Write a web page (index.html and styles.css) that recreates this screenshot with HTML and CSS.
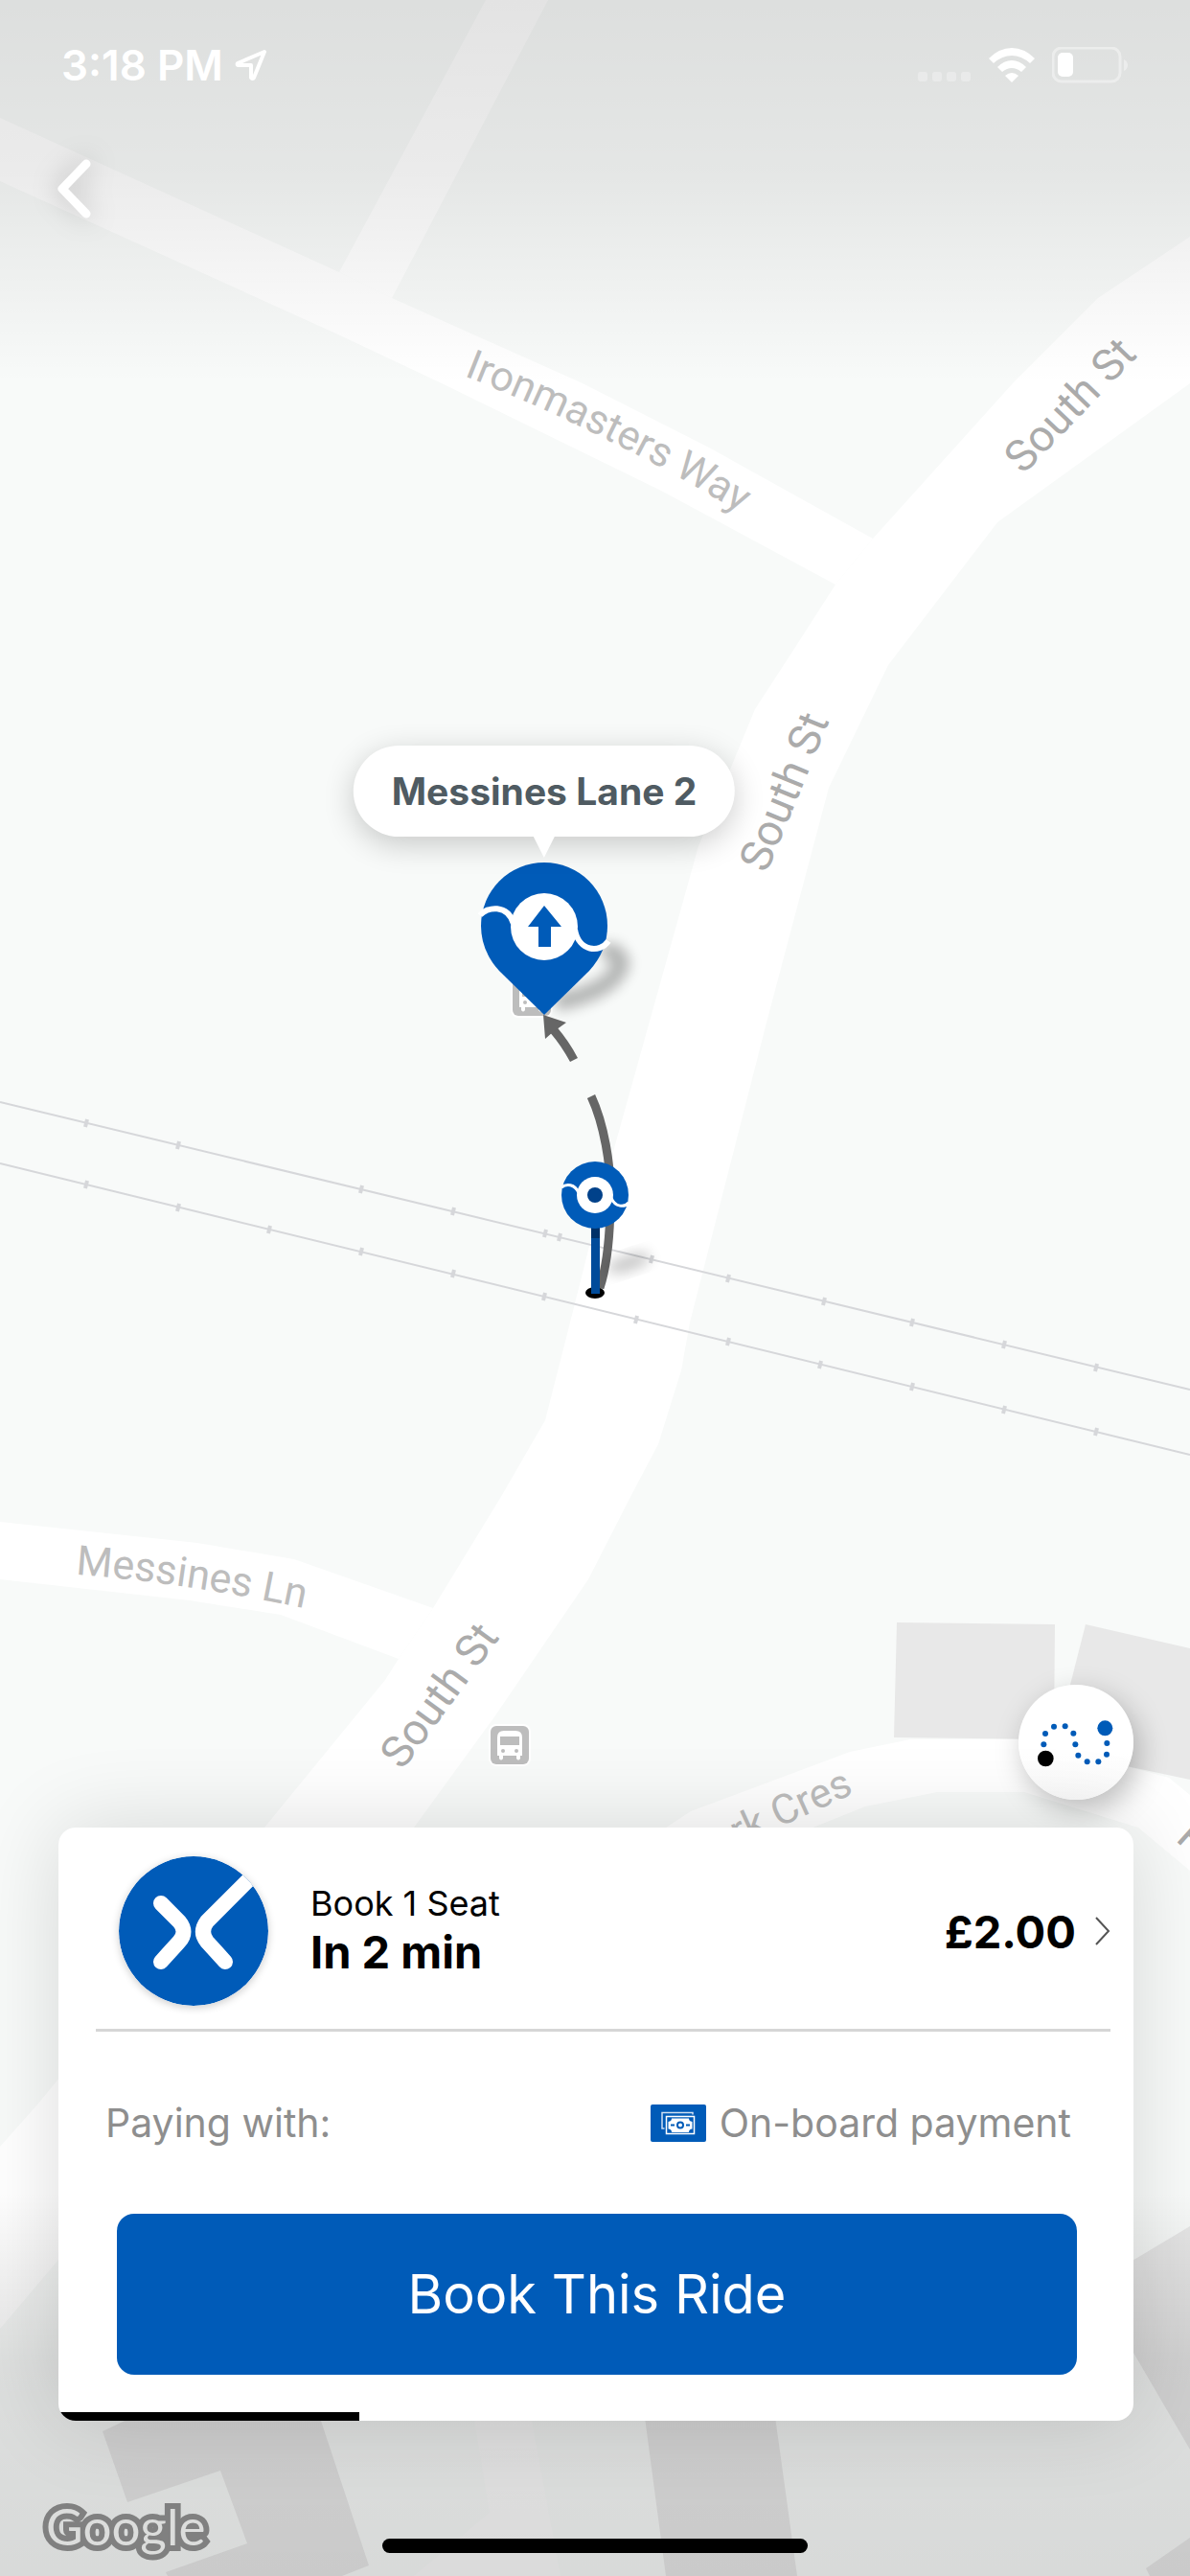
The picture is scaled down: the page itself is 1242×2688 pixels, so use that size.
FILE: index.html
```html
<!DOCTYPE html>
<html lang="en">
<head>
    <meta charset="UTF-8">
    <meta name="viewport" content="width=device-width, initial-scale=1.0">
    <title>Book a Ride</title>
    <link rel="stylesheet" href="styles.css">
</head>
<body>
    <main class="screen">
        <!-- Map -->
        <svg class="map" viewBox="0 0 1242 2688" preserveAspectRatio="xMidYMid slice" role="img" aria-label="Map around South St">
            <defs>
                <path id="ironmasters" d="M484 392 Q650 458 800 552"/>
                <path id="messines" d="M79 1643 Q200 1652 335 1682"/>
                <path id="south-top" d="M1068 496 L1214 344"/>
                <path id="south-mid" d="M800 912 L882 712"/>
                <path id="south-low" d="M420 1848 L540 1684"/>
                <path id="park" d="M670 1972 L892 1871"/>
                <filter id="soft" x="-50%" y="-50%" width="200%" height="200%">
                    <feGaussianBlur stdDeviation="7"/>
                </filter>
                <g id="bus-stop">
                    <rect x="-22" y="-22" width="44" height="44" rx="8" fill="#fff"/>
                    <rect x="-20" y="-20" width="40" height="40" rx="6" fill="#bdbdbd"/>
                    <path fill="#fff" d="M-13 -8 Q-13 -15 -6 -15 H6 Q13 -15 13 -8 V11 H11 V14 Q9 17 7 14 V11 H-7 V14 Q-9 17 -11 14 V11 H-13 Z"/>
                    <rect x="-10" y="-9" width="20" height="9" fill="#bdbdbd"/>
                    <circle cx="-7" cy="6" r="2" fill="#bdbdbd"/>
                    <circle cx="7" cy="6" r="2" fill="#bdbdbd"/>
                </g>
            </defs>

            <rect width="1242" height="2688" fill="#f8faf9"/>

            <!-- roads -->
            <g fill="#fff">
                <path d="M507 0 H572 L409 311 L354 284 Z"/>
                <path d="M0 123 L354 284 L409 311 L608 400 L740 467 L911 562 L872 610 L690 512 L461 400 L355 350 L0 189 Z"/>
                <path d="M1242 247 L1146 311 L1057 400 L911 562 L872 610 L827 680 L788 740 L729 883 L638 1209 L595 1380 L569 1482 L524 1560 L452 1678 L416 1731 L402 1753 L276 1907 L40 2195 L0 2240 V2430 L61 2358 L432 1907 L515 1793 L614 1648 L659 1560 L687 1507 L711 1430 L720 1380 L800 1067 L865 822 L927 694 L1041 545 L1242 400 Z"/>
                <path d="M0 1588 L206 1610 L307 1627 L452 1678 L416 1731 L293 1685 L198 1670 L0 1648 Z"/>
                <path d="M660 1930 L721 1890 L887 1828 L950 1815 L1061 1815 L1176 1843 L1220 1855 L1242 1873 V1952 L1188 1907 L1069 1870 L978 1870 L903 1885 L846 1908 L800 1940 Z"/>
                <path d="M491 2500 L511 2622 L432 2688 H585 L550 2500 Z" fill="#fbfbfb"/>
            </g>

            <!-- buildings -->
            <g fill="#e8e8e8">
                <path d="M936 1693 L1101 1695 L1100 1815 L933 1813 Z"/>
                <path d="M1133 1695 L1242 1720 V1857 L1176 1843 L1100 1825 Z"/>
                <path d="M143 2520 L107 2537 L133 2611 L230 2578 L258 2654 L173 2684 L175 2688 H357 L385 2677 L333 2520 Z"/>
                <path d="M670 2500 L695 2688 H832 L806 2500 Z"/>
                <path d="M1242 2323 L1150 2378 V2390 L1183 2455 L1242 2556 Z"/>
                <path d="M1242 2648 L1196 2680 L1200 2688 H1242 Z"/>
            </g>

            <!-- railway -->
            <g fill="none" stroke="#d6d7da">
                <path stroke-width="2" d="M0 1150 L1242 1450 M0 1214 L1242 1518"/>
                <path stroke-width="4" d="M91 1168 L89 1176 M187 1191 L185 1199 M378 1237 L376 1245 M474 1260 L472 1268 M570 1283 L568 1291 M585 1287 L583 1295 M681 1310 L679 1318 M761 1330 L759 1338 M861 1354 L859 1362 M953 1376 L951 1384 M1049 1399 L1047 1407 M1145 1423 L1143 1431"/>
                <path stroke-width="4" d="M91 1232 L89 1240 M187 1256 L185 1264 M282 1279 L280 1287 M378 1302 L376 1310 M474 1325 L472 1333 M569 1349 L567 1357 M665 1373 L663 1381 M761 1396 L759 1404 M857 1420 L855 1428 M953 1443 L951 1451 M1049 1467 L1047 1475 M1145 1490 L1143 1498"/>
            </g>

            <g class="street">
                <text class="minor"><textPath href="#ironmasters">Ironmasters Way</textPath></text>
                <text class="minor"><textPath href="#messines">Messines Ln</textPath></text>
                <text class="minor" text-anchor="end"><textPath href="#park" startOffset="100%">Park Cres</textPath></text>
                <text><textPath href="#south-top">South St</textPath></text>
                <text><textPath href="#south-mid">South St</textPath></text>
                <text><textPath href="#south-low">South St</textPath></text>
                <text transform="translate(1226 1920) rotate(42)">P</text>
            </g>

            <use href="#bus-stop" x="532" y="1821"/>
            <use href="#bus-stop" x="555" y="1040"/>

            <!-- walking route -->
            <g fill="none" stroke="#666" stroke-width="9">
                <path d="M617 1144 C630 1172 638 1215 637 1250 C637 1290 633 1322 626 1344"/>
                <path d="M599 1106 Q590 1089 578 1075"/>
            </g>
            <path fill="#666" d="M567 1059 L591 1067 L577 1077 L569 1084 Z"/>

            <!-- pick-up stop -->
            <ellipse cx="656" cy="1318" rx="24" ry="8" fill="#000" opacity=".22" filter="url(#soft)" transform="rotate(-18 656 1318)"/>
            <ellipse cx="621" cy="1349" rx="10" ry="6"/>
            <rect x="617" y="1280" width="9" height="70" fill="#004b9a"/>
            <rect x="617" y="1280" width="9" height="12" fill="#003068"/>
            <circle cx="621" cy="1247" r="35" fill="#005bb8"/>
            <g fill="none" stroke="#fff" stroke-width="3">
                <path d="M586 1239 C591 1235 600 1235 604 1245"/>
                <path d="M638 1250 C642 1260 652 1260 656 1255"/>
            </g>
            <circle cx="621" cy="1247" r="19" fill="#fff"/>
            <circle cx="621" cy="1247" r="8" fill="#00418a"/>

            <!-- destination pin -->
            <path d="M580 1046 Q640 1034 648 1006 Q646 990 628 994" fill="none" stroke="#000" stroke-width="18" opacity=".28" filter="url(#soft)"/>
            <path fill="#005bb8" d="M568 1059 L521 1013 Q502 992 502 966 A66 66 0 0 1 634 966 Q634 992 615 1013 Z"/>
            <g fill="none" stroke="#fff" stroke-width="6">
                <path d="M501 955 C508 946 530 943 536 964"/>
                <path d="M600 970 C604 993 626 995 635 982"/>
            </g>
            <circle cx="568" cy="967" r="35" fill="#fff"/>
            <path fill="#005bb8" d="M568 945 L586 967 H575 V988 H562 V967 H551 Z"/>
        </svg>

        <div class="callout">Messines Lane 2</div>

        <header class="top">
            <div class="status">
                <div class="status-group">
                    <span class="time">3:18 PM</span>
                    <svg width="34" height="34" viewBox="0 0 34 34" fill="none" stroke="#fff" stroke-width="4" stroke-linejoin="round">
                        <path d="M31 3 L3 15 Q2 17 4 17 H17 V30 Q19 32 20 30 Z"/>
                    </svg>
                </div>
                <div class="status-group status-right">
                    <svg class="signal" width="56" height="10" viewBox="0 0 56 10" fill="#fff" opacity=".3">
                        <rect width="10" height="10" rx="3"/>
                        <rect x="15" width="10" height="10" rx="3"/>
                        <rect x="30" width="10" height="10" rx="3"/>
                        <rect x="45" width="10" height="10" rx="3"/>
                    </svg>
                    <svg width="48" height="36" viewBox="0 0 48 36" fill="#fff">
                        <path d="M0 11 Q11 0 24 0 Q37 0 48 11 L43 16 Q34 8 24 8 Q14 8 5 16 Z"/>
                        <path d="M9 20 Q16 13 24 13 Q32 13 39 20 L34 25 Q29 21 24 21 Q19 21 14 25 Z"/>
                        <path d="M17 29 Q24 23 31 29 L24 36 Z"/>
                    </svg>
                    <svg width="80" height="38" viewBox="0 0 80 38" fill="none">
                        <rect x="1" y="1" width="70" height="35" rx="9" stroke="#fff" stroke-width="3" opacity=".4"/>
                        <rect x="6" y="6" width="16" height="25" rx="5" fill="#fff"/>
                        <path d="M75 13 Q79 15 79 19 Q79 23 75 25 Z" fill="#fff" opacity=".4"/>
                    </svg>
                </div>
            </div>
            <button class="back" type="button" aria-label="Back">
                <svg width="36" height="62" viewBox="0 0 36 62" fill="none" stroke="#fff" stroke-width="9" stroke-linecap="round" stroke-linejoin="round">
                    <path d="M30 5 L5 31 L30 57"/>
                </svg>
            </button>
        </header>

        <section class="sheet">
            <button class="route-btn" type="button" aria-label="Show whole route">
                <svg width="120" height="120" viewBox="0 0 360 360" fill="#005bb8">
                    <circle cx="85" cy="231" r="25" fill="#000"/>
                    <circle cx="271" cy="136" r="24"/>
                    <circle cx="79" cy="187" r="9"/>
                    <circle cx="84" cy="153" r="9"/>
                    <circle cx="111" cy="131" r="9"/>
                    <circle cx="146" cy="130" r="9"/>
                    <circle cx="172" cy="152" r="9"/>
                    <circle cx="178" cy="187" r="9"/>
                    <circle cx="187" cy="221" r="9"/>
                    <circle cx="215" cy="241" r="9"/>
                    <circle cx="250" cy="241" r="9"/>
                    <circle cx="276" cy="218" r="9"/>
                    <circle cx="277" cy="183" r="9"/>
                </svg>
            </button>

            <div class="card">
                <button class="ride" type="button">
                    <svg class="ride-logo" width="156" height="156" viewBox="0 0 156 156">
                        <clipPath id="disc"><circle cx="78" cy="78" r="78"/></clipPath>
                        <circle cx="78" cy="78" r="78" fill="#005bb8"/>
                        <g clip-path="url(#disc)" fill="none" stroke="#fff" stroke-width="16" stroke-linecap="round">
                            <path d="M44 49 L63 68 Q72 79 63 89 L44 110"/>
                            <path d="M111 110 L92 89 Q84 79 92 68 L148 12"/>
                        </g>
                    </svg>
                    <span class="ride-info">
                        <span class="ride-seats">Book 1 Seat</span>
                        <span class="ride-time">In 2 min</span>
                    </span>
                    <span class="ride-price">£2.00</span>
                    <svg class="chevron" width="16" height="30" viewBox="0 0 16 30" fill="none" stroke="#555" stroke-width="2">
                        <path d="M1 1 L14 15 L1 29"/>
                    </svg>
                </button>

                <div class="payment">
                    <span>Paying with:</span>
                    <span class="payment-method">
                        <svg width="58" height="39" viewBox="0 0 116 78" fill="none">
                            <rect width="116" height="78" rx="4" fill="#005bb8"/>
                            <path d="M88 21 V17 H24 V50 H29" stroke="#cfe0f2" stroke-width="3"/>
                            <rect x="33" y="25" width="58" height="36" stroke="#fff" stroke-width="3"/>
                            <path fill="#fff" d="M44 29 H80 Q80 35 87 36 V51 Q80 51 80 58 H44 Q44 51 37 51 V36 Q44 35 44 29 Z"/>
                            <circle cx="62" cy="43" r="6" stroke="#005bb8" stroke-width="4"/>
                            <path d="M42 43 H50 M74 43 H82" stroke="#005bb8" stroke-width="4"/>
                        </svg>
                        On-board payment
                    </span>
                </div>

                <button class="book" type="button">Book This Ride</button>
                <div class="progress"><div class="progress-bar"></div></div>
            </div>
        </section>

        <footer class="bottom">
            <span class="google">Google</span>
            <span class="home-bar"></span>
        </footer>
    </main>
</body>
</html>
```
FILE: styles.css
```css
* {
    box-sizing: border-box;
}

body {
    margin: 0;
    font-family: Inter, "Liberation Sans", sans-serif;
    color: #000;
    background-color: #f8faf9;
}

button {
    border: none;
    padding: 0;
    background: none;
    font: inherit;
    color: inherit;
    cursor: pointer;
}

svg {
    display: block;
    flex-shrink: 0;
}

.screen {
    position: relative;
    display: flex;
    flex-direction: column;
    min-height: 100vh;
    overflow: hidden;
}

/* Map */
.map {
    position: absolute;
    top: 0;
    left: 0;
    width: 100%;
    height: 100%;
}

.street {
    font-family: Roboto, sans-serif;
    font-size: 46px;
    fill: #ababab;
}

.street .minor {
    font-size: 43px;
    fill: #bdbdbd;
}

.callout {
    position: absolute;
    top: 778px;
    left: 568px;
    transform: translateX(-50%);
    padding: 0 40px;
    border-radius: 48px;
    background-color: #fff;
    color: #4f5b62;
    font-size: 39px;
    font-weight: 700;
    line-height: 95px;
    white-space: nowrap;
    box-shadow: 0 8px 32px rgba(0, 0, 0, 0.2);
}

.callout::after {
    content: "";
    position: absolute;
    top: 100%;
    left: 50%;
    margin-left: -11px;
    border: 11px solid transparent;
    border-top: 22px solid #fff;
    border-bottom: none;
}

/* Status bar and back button */
.top {
    position: relative;
    height: 400px;
    padding: 44px 64px 0;
    background: linear-gradient(rgba(0, 0, 0, 0.11), rgba(0, 0, 0, 0.08) 45%, rgba(0, 0, 0, 0));
}

.status {
    display: flex;
    justify-content: space-between;
    height: 48px;
}

.status-group {
    display: flex;
    align-items: center;
    gap: 12px;
}

.status-right {
    gap: 18px;
}

.signal {
    align-self: flex-end;
    margin-bottom: 7px;
}

.time {
    color: #fff;
    font-size: 44px;
    font-weight: 600;
}

.back {
    margin: 74px 0 0 -4px;
    filter: drop-shadow(0 0 14px rgba(0, 0, 0, 0.25));
}

/* Booking sheet */
.sheet {
    position: relative;
    display: flex;
    flex-direction: column;
    margin-top: auto;
    padding: 0 59px 0 61px;
}

.route-btn {
    align-self: flex-end;
    margin-bottom: 29px;
    border-radius: 50%;
    background: linear-gradient(#fff 60%, #f9f9f9);
    box-shadow: 6px 10px 30px rgba(0, 0, 0, 0.25);
}

.card {
    border-radius: 18px;
    background-color: #fff;
    box-shadow: 0 0 90px rgba(0, 0, 0, 0.14);
    overflow: hidden;
}

.ride {
    display: flex;
    align-items: center;
    width: calc(100% - 63px);
    height: 213px;
    margin: 0 24px 0 39px;
    padding: 6px 0 0 24px;
    border-bottom: 3px solid #d6d6d6;
    text-align: left;
}

.ride-logo {
    border-radius: 50%;
    box-shadow: 0 2px 8px rgba(0, 0, 0, 0.2);
}

.ride-info {
    display: flex;
    flex-direction: column;
    flex: 1;
    margin-left: 44px;
}

.ride-seats {
    font-size: 36px;
    line-height: 44px;
}

.ride-time {
    font-size: 47px;
    font-weight: 700;
    line-height: 58px;
}

.ride-price {
    font-size: 47px;
    font-weight: 700;
}

.chevron {
    margin-left: 20px;
}

.payment {
    display: flex;
    align-items: center;
    justify-content: space-between;
    height: 190px;
    padding: 0 65px 0 49px;
    color: #8e8e8e;
    font-size: 41px;
}

.payment-method {
    display: flex;
    align-items: center;
    gap: 14px;
}

.book {
    display: block;
    width: calc(100% - 120px);
    height: 168px;
    margin: 0 59px 39px 61px;
    border-radius: 18px;
    background-color: #005bb8;
    color: #fff;
    font-size: 56px;
}

.progress {
    height: 9px;
}

.progress-bar {
    width: 28%;
    height: 100%;
    background-color: #000;
}

/* Map credit and home indicator */
.bottom {
    position: relative;
    display: grid;
    grid-template-columns: 1fr 444px 1fr;
    align-items: end;
    height: 162px;
    padding-bottom: 24px;
}

/* darkens the map below the card */
.screen::after {
    content: "";
    position: absolute;
    right: 0;
    bottom: 0;
    left: 0;
    height: 400px;
    background: linear-gradient(rgba(0, 0, 0, 0), rgba(0, 0, 0, 0.11) 45%, rgba(0, 0, 0, 0.13));
}

.sheet,
.bottom {
    z-index: 1;
}

.google {
    padding-left: 48px;
    color: #dcdddc;
    font-family: Lato, sans-serif;
    font-size: 53px;
    line-height: 56px;
    -webkit-text-stroke: 12px #808080;
    paint-order: stroke fill;
}

.home-bar {
    height: 15px;
    border-radius: 8px;
    background-color: #000;
}
```
